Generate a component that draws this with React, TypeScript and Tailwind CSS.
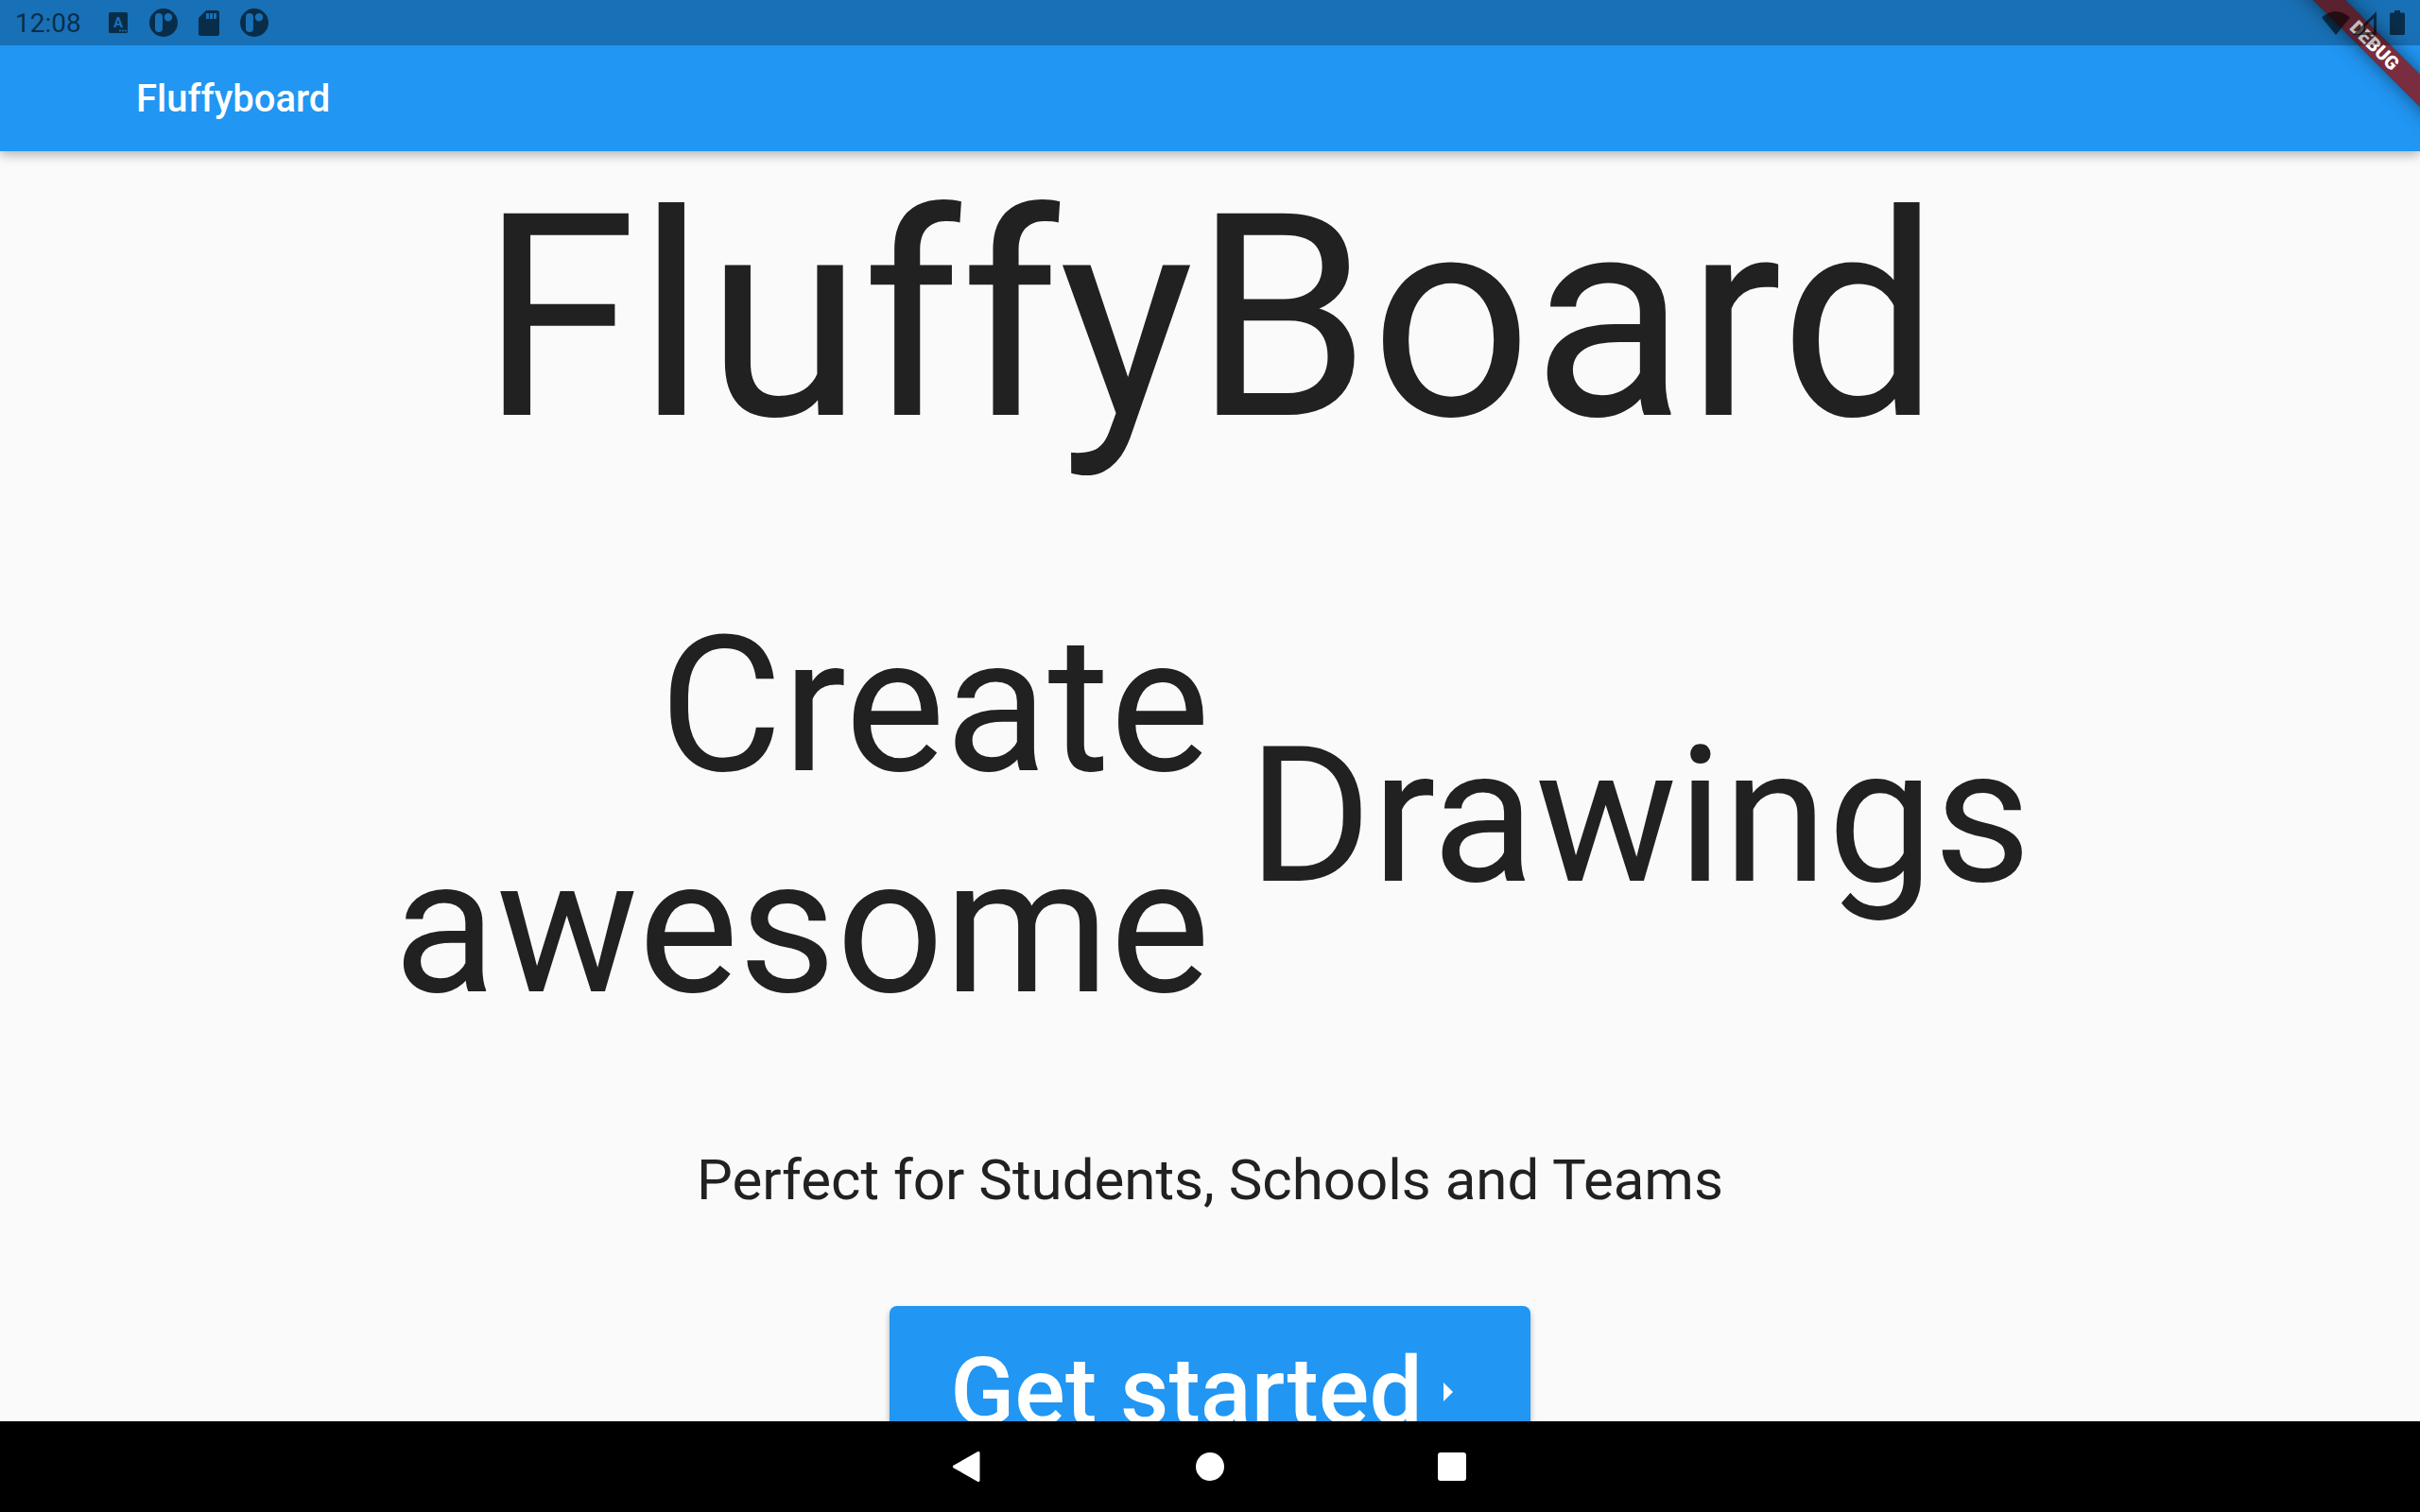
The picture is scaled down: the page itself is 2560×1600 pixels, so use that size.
function DebugModeIcon() {
  return (
    <svg viewBox="0 0 30 30" className="size-[30px]" fill="currentColor" fillRule="evenodd" aria-hidden="true">
      <path d="M15 0a15 15 0 1 1 0 30a15 15 0 0 1 0-30ZM10 5a4 4 0 0 0-4 4v12a4 4 0 0 0 8 0V9a4 4 0 0 0-4-4ZM20 5a4.200 4.200 0 1 0 0 8.400a4.200 4.200 0 0 0 0-8.400Z" />
    </svg>
  );
}

function KeyboardIcon() {
  return (
    <svg viewBox="0 0 20 22" className="h-[22px] w-5" aria-hidden="true">
      <rect width="20" height="22" rx="1.500" fill="currentColor" />
      <text x="10" y="16" textAnchor="middle" fontSize="15" fontWeight="700" fill="#1a70b6">
        A
      </text>
      <path d="M11 19.500h2M14 19.500h2M17 19.500h2" stroke="#1a70b6" strokeWidth="1.500" />
    </svg>
  );
}

function SdCardIcon() {
  return (
    <svg viewBox="0 0 22 27" className="h-[27px] w-[22px]" fill="currentColor" fillRule="evenodd" aria-hidden="true">
      <path d="M8 0h11.500a2.500 2.500 0 0 1 2.500 2.500v22a2.500 2.500 0 0 1-2.500 2.500h-17A2.500 2.500 0 0 1 0 24.500V8ZM8 3v6h3V3ZM12 3v6h3V3ZM16 3v6h3V3Z" />
    </svg>
  );
}

function StatusBar() {
  return (
    <div className="relative z-20 flex h-12 items-center justify-between bg-black/25 px-4 text-black/60">
      <div className="flex items-center gap-[15px]">
        <time className="pt-0.5 text-[28px] leading-8">12:08</time>
        <div className="flex items-center">
          <span className="flex w-12 justify-center"><KeyboardIcon /></span>
          <span className="flex w-12 justify-center"><DebugModeIcon /></span>
          <span className="flex w-12 justify-center"><SdCardIcon /></span>
          <span className="flex w-12 justify-center"><DebugModeIcon /></span>
        </div>
      </div>
      <div className="flex items-center">
        <svg viewBox="0 0 30 25" className="mr-[3px] h-[25px] w-[30px]" fill="currentColor" aria-hidden="true">
          <path d="M0 6.500Q15 -6.500 30 6.500L15 25Z" />
        </svg>
        <svg viewBox="0 0 25 25" className="mr-[14px] size-[25px]" fill="currentColor" fillRule="evenodd" aria-hidden="true">
          <path d="M0 25L25 0V25ZM13 22H22V7L13 16Z" />
        </svg>
        <svg viewBox="0 0 16 26" className="h-[26px] w-4" fill="currentColor" aria-hidden="true">
          <path d="M5 0h6v2.500h3.500a1.500 1.500 0 0 1 1.500 1.500v20.500a1.500 1.500 0 0 1-1.500 1.500h-13a1.500 1.500 0 0 1-1.500-1.500V4a1.500 1.500 0 0 1 1.500-1.500H5Z" />
        </svg>
      </div>
    </div>
  );
}

function DebugBanner() {
  return (
    <div className="pointer-events-none absolute top-0 right-0 z-10 size-40 overflow-hidden">
      <div className="absolute top-9 -left-2 w-60 rotate-45 bg-black/50 shadow-[0_0_20px_rgba(0,0,0,0.5)]">
        <p className="bg-[#b71c1c]/63 text-center text-[20px] leading-6 font-black text-white">DEBUG</p>
      </div>
    </div>
  );
}

function NavigationBar() {
  return (
    <nav className="flex h-24 shrink-0 justify-center bg-black text-white">
      <button aria-label="Back" className="flex w-64 items-center justify-center">
        <svg viewBox="0 0 48 48" className="size-12" fill="currentColor" aria-hidden="true">
          <path d="M36.500 9.500v29a1.500 1.500 0 0 1-2.500 1.200L8.500 25.200a1.600 1.600 0 0 1 0-2.400L34 8.300a1.500 1.500 0 0 1 2.500 1.200Z" />
        </svg>
      </button>
      <button aria-label="Home" className="flex w-64 items-center justify-center">
        <span className="size-[30px] rounded-full bg-white" />
      </button>
      <button aria-label="Overview" className="flex w-64 items-center justify-center">
        <span className="size-[30px] rounded-[3px] bg-white" />
      </button>
    </nav>
  );
}

export default function App() {
  return (
    <div className="relative flex h-screen flex-col overflow-hidden bg-[#fafafa] font-['Roboto',sans-serif] text-[#212121]">
      <header className="shrink-0 bg-[#2196f3] shadow-[0_4px_10px_rgba(0,0,0,0.15),0_4px_12px_rgba(0,0,0,0.15)]">
        <StatusBar />
        <div className="flex h-28 items-center px-36 pt-0.5 text-[40px] leading-[48px] font-medium text-white">Fluffyboard</div>
      </header>
      <DebugBanner />
      <main className="flex min-h-0 grow flex-col items-center overflow-hidden">
        <h1 className="shrink-0 text-[300px] leading-[354px]">FluffyBoard</h1>
        <div className="mt-[116px] grid w-full shrink-0 grid-cols-2 items-center text-[200px] leading-[234px]">
          <p className="text-right">
            Create
            <br />
            awesome
          </p>
          <p className="pl-10">Drawings</p>
        </div>
        <p className="mt-[116px] shrink-0 text-[60px] leading-[70px]">Perfect for Students, Schools and Teams</p>
        <button className="mt-[98px] flex shrink-0 items-center gap-0.5 rounded-lg bg-[#2196f3] px-16 py-8 text-[100px] leading-[118px] font-medium text-white shadow-[0_4px_6px_rgba(0,0,0,0.3)]">
          Get started
          <svg viewBox="0 0 24 24" className="size-12" fill="currentColor" aria-hidden="true">
            <path d="M10 17l5-5-5-5v10z" />
          </svg>
        </button>
      </main>
      <NavigationBar />
    </div>
  );
}
